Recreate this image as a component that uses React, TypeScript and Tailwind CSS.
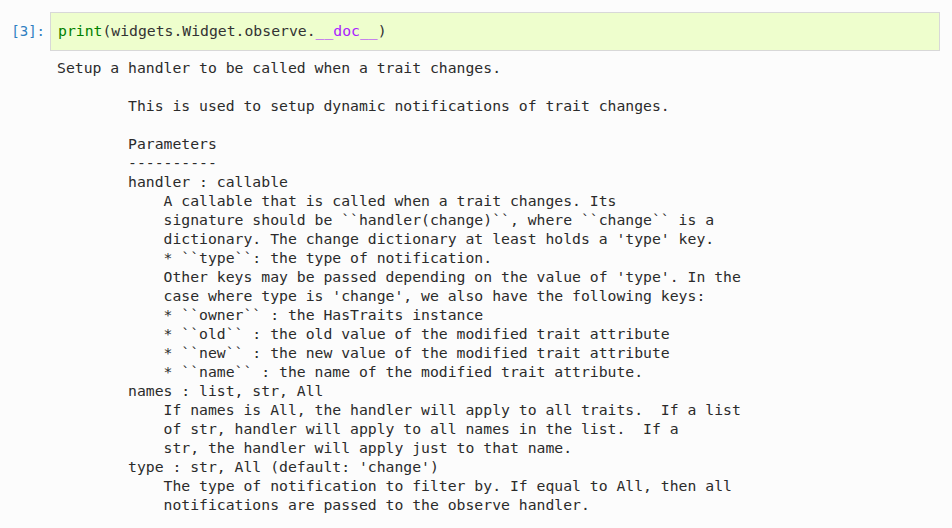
import React from "react";

const DOC = `Setup a handler to be called when a trait changes.

        This is used to setup dynamic notifications of trait changes.

        Parameters
        ----------
        handler : callable
            A callable that is called when a trait changes. Its
            signature should be \`\`handler(change)\`\`, where \`\`change\`\` is a
            dictionary. The change dictionary at least holds a 'type' key.
            * \`\`type\`\`: the type of notification.
            Other keys may be passed depending on the value of 'type'. In the
            case where type is 'change', we also have the following keys:
            * \`\`owner\`\` : the HasTraits instance
            * \`\`old\`\` : the old value of the modified trait attribute
            * \`\`new\`\` : the new value of the modified trait attribute
            * \`\`name\`\` : the name of the modified trait attribute.
        names : list, str, All
            If names is All, the handler will apply to all traits.  If a list
            of str, handler will apply to all names in the list.  If a
            str, the handler will apply just to that name.
        type : str, All (default: 'change')
            The type of notification to filter by. If equal to All, then all
            notifications are passed to the observe handler.`;

export default function App() {
  return (
    <div className="w-[952px] h-[528px] overflow-hidden bg-[#fcfcfc] pt-[12px] pr-[12px] font-['DejaVu_Sans_Mono',monospace]">
      {/* input cell */}
      <div className="flex">
        <div className="w-[50px] shrink-0 pr-[5px] flex items-center justify-end text-[14px] text-[#307fc1]">
          [3]:
        </div>
        <div className="flex-1 h-[39px] flex items-center pl-[7px] pb-[1px] border border-[#d8d8d8] bg-[#eefecd] text-[14.75px] text-[#333333] whitespace-pre">
          <span className="text-[#008000]">print</span>
          <span>(widgets.Widget.observe.</span>
          <span className="text-[#aa22ff]">__doc__</span>
          <span>)</span>
        </div>
      </div>

      {/* output */}
      <pre className="mt-[7px] pl-[57px] text-[14.75px] leading-[19px] text-[#2b2b2b] font-['DejaVu_Sans_Mono',monospace]">
        {DOC}
      </pre>
    </div>
  );
}
